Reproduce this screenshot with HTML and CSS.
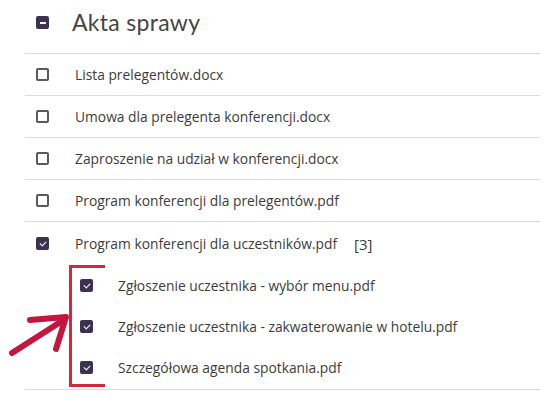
FILE: index.html
```html
<!DOCTYPE html>
<html lang="pl">
<head>
<meta charset="utf-8">
<link rel="stylesheet" href="styles.css">
</head>
<body>
<div class="panel">
  <div class="header">
    <span class="cb cb-mixed"></span>
    <span class="title">Akta sprawy</span>
  </div>
  <div class="row"><span class="cb"></span><span class="name">Lista prelegentów.docx</span></div>
  <div class="row"><span class="cb"></span><span class="name">Umowa dla prelegenta konferencji.docx</span></div>
  <div class="row"><span class="cb"></span><span class="name">Zaproszenie na udział w konferencji.docx</span></div>
  <div class="row"><span class="cb"></span><span class="name">Program konferencji dla prelegentów.pdf</span></div>
  <div class="group">
    <div class="row row-parent"><span class="cb cb-on"></span><span class="name">Program konferencji dla uczestników.pdf</span><span class="count">[3]</span></div>
    <div class="children">
      <div class="child"><span class="cb cb-on"></span><span class="name">Zgłoszenie uczestnika - wybór menu.pdf</span></div>
      <div class="child"><span class="cb cb-on"></span><span class="name">Zgłoszenie uczestnika - zakwaterowanie w hotelu.pdf</span></div>
      <div class="child"><span class="cb cb-on"></span><span class="name">Szczegółowa agenda spotkania.pdf</span></div>
      <div class="bracket"></div>
    </div>
  </div>
  <svg class="arrow" width="80" height="60" viewBox="0 0 80 60">
    <path d="M12 50 L62 18" stroke="#c4163e" stroke-width="6" stroke-linecap="round" fill="none"/>
    <path d="M30 17 L66 14 L56 46" stroke="#c4163e" stroke-width="6" stroke-linecap="round" stroke-linejoin="round" fill="none"/>
  </svg>
</div>
</body>
</html>
```
FILE: styles.css
```css
html, body {
  margin: 0;
  padding: 0;
  background: #ffffff;
}
body {
  font-family: "Open Sans", "Noto Sans", sans-serif;
  color: #3c3c3c;
}
.panel {
  position: relative;
  margin-left: 25px;
  width: 515px;
}
.header {
  height: 53px;
  border-bottom: 1px solid #dcdcdc;
  display: flex;
  align-items: center;
  padding-left: 11px;
}
.header .cb { margin-top: -8px; }
.title {
  font-family: "Lato", sans-serif;
  font-size: 23px;
  color: #454545;
  margin-left: 23px;
  margin-top: -9px;
  letter-spacing: 0.3px;
}
.row {
  height: 41px;
  border-bottom: 1px solid #dcdcdc;
  display: flex;
  align-items: center;
  padding-left: 11px;
}
.row-parent {
  border-bottom: none;
  height: 43px;
}
.name {
  font-size: 13.8px;
  margin-left: 26px;
  white-space: nowrap;
}
.count {
  font-size: 15px;
  margin-left: 17px;
}
.cb {
  width: 13px;
  height: 13px;
  box-sizing: border-box;
  border: 2px solid #5a5a5a;
  border-radius: 2px;
  flex: none;
  position: relative;
}
.cb-on, .cb-mixed {
  background: #3d3150;
  border-color: #3d3150;
}
.cb-on::after {
  content: "";
  position: absolute;
  left: 2px;
  top: 1.5px;
  width: 5px;
  height: 3px;
  border-left: 1.5px solid #fff;
  border-bottom: 1.5px solid #fff;
  transform: rotate(-45deg);
}
.cb-mixed::after {
  content: "";
  position: absolute;
  left: 1.5px;
  right: 1.5px;
  top: 3.5px;
  height: 2px;
  background: #fff;
}
.children {
  position: relative;
  border-bottom: 1px solid #dcdcdc;
  padding-bottom: 1px;
}
.child {
  height: 41px;
  display: flex;
  align-items: center;
  padding-left: 55px;
}
.child .name {
  margin-left: 25px;
}
.bracket {
  position: absolute;
  left: 44px;
  top: 0;
  width: 36px;
  height: 122px;
  border: 3px solid #d02a3e;
  border-right: none;
  box-sizing: border-box;
}
.arrow {
  position: absolute;
  left: -25px;
  top: 303px;
}
```
